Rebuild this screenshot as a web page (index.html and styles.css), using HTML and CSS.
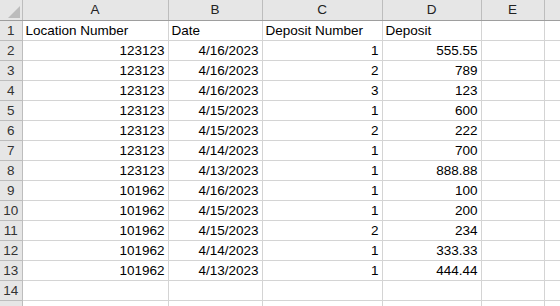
FILE: index.html
```html
<!DOCTYPE html>
<html lang="en">
<head>
    <meta charset="UTF-8">
    <title>Deposits</title>
    <link rel="stylesheet" href="styles.css">
</head>
<body>
    <table class="sheet">
        <colgroup>
            <col class="c-row">
            <col class="c-a">
            <col class="c-b">
            <col class="c-c">
            <col class="c-d">
            <col class="c-e">
            <col>
        </colgroup>
        <thead>
            <tr>
                <th class="corner"><span class="tri"></span></th>
                <th>A</th>
                <th>B</th>
                <th>C</th>
                <th>D</th>
                <th>E</th>
                <th></th>
            </tr>
        </thead>
        <tbody>
            <tr><th>1</th><td>Location Number</td><td>Date</td><td>Deposit Number</td><td>Deposit</td><td></td><td></td></tr>
            <tr><th>2</th><td class="num">123123</td><td class="num">4/16/2023</td><td class="num">1</td><td class="num">555.55</td><td></td><td></td></tr>
            <tr><th>3</th><td class="num">123123</td><td class="num">4/16/2023</td><td class="num">2</td><td class="num">789</td><td></td><td></td></tr>
            <tr><th>4</th><td class="num">123123</td><td class="num">4/16/2023</td><td class="num">3</td><td class="num">123</td><td></td><td></td></tr>
            <tr><th>5</th><td class="num">123123</td><td class="num">4/15/2023</td><td class="num">1</td><td class="num">600</td><td></td><td></td></tr>
            <tr><th>6</th><td class="num">123123</td><td class="num">4/15/2023</td><td class="num">2</td><td class="num">222</td><td></td><td></td></tr>
            <tr><th>7</th><td class="num">123123</td><td class="num">4/14/2023</td><td class="num">1</td><td class="num">700</td><td></td><td></td></tr>
            <tr><th>8</th><td class="num">123123</td><td class="num">4/13/2023</td><td class="num">1</td><td class="num">888.88</td><td></td><td></td></tr>
            <tr><th>9</th><td class="num">101962</td><td class="num">4/16/2023</td><td class="num">1</td><td class="num">100</td><td></td><td></td></tr>
            <tr><th>10</th><td class="num">101962</td><td class="num">4/15/2023</td><td class="num">1</td><td class="num">200</td><td></td><td></td></tr>
            <tr><th>11</th><td class="num">101962</td><td class="num">4/15/2023</td><td class="num">2</td><td class="num">234</td><td></td><td></td></tr>
            <tr><th>12</th><td class="num">101962</td><td class="num">4/14/2023</td><td class="num">1</td><td class="num">333.33</td><td></td><td></td></tr>
            <tr><th>13</th><td class="num">101962</td><td class="num">4/13/2023</td><td class="num">1</td><td class="num">444.44</td><td></td><td></td></tr>
            <tr><th>14</th><td></td><td></td><td></td><td></td><td></td><td></td></tr>
            <tr><th></th><td></td><td></td><td></td><td></td><td></td><td></td></tr>
        </tbody>
    </table>
</body>
</html>
```

FILE: styles.css
```css
* {
    margin: 0;
    padding: 0;
    box-sizing: border-box;
}

body {
    background: #ffffff;
    font-family: "Liberation Sans", Arial, sans-serif;
    font-size: 13.5px;
    color: #000;
    overflow: hidden;
}

.sheet {
    border-collapse: collapse;
    table-layout: fixed;
    width: 580px;
}

.c-row { width: 22px; }
.c-a { width: 146px; }
.c-b { width: 94px; }
.c-c { width: 120px; }
.c-d { width: 99px; }
.c-e { width: 63px; }

th, td {
    height: 20px;
    border-right: 1px solid #d4d4d4;
    border-bottom: 1px solid #d4d4d4;
    padding: 0 3px;
    white-space: nowrap;
    overflow: hidden;
    line-height: 19px;
}

th {
    background: #e6e6e6;
    font-weight: normal;
    color: #222;
    text-align: center;
    border-color: #bdbdbd;
}

thead th {
    height: 20px;
    border-bottom: 1px solid #9e9e9e;
}

tbody th {
    padding: 0;
    color: #333;
}

.num {
    text-align: right;
}

.corner {
    position: relative;
}

.tri {
    position: absolute;
    right: 2px;
    bottom: 2px;
    width: 0;
    height: 0;
    border-left: 12px solid transparent;
    border-bottom: 12px solid #bcbcbc;
}
```
